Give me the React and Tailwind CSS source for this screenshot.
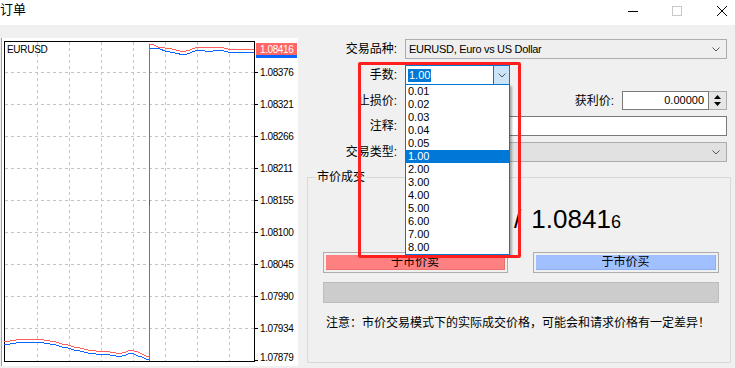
const lots = ["0.01", "0.02", "0.03", "0.04", "0.05", "1.00", "2.00", "3.00", "4.00", "5.00", "6.00", "7.00", "8.00"];

const levels = [
    { y: 72, label: "1.08376" },
    { y: 104, label: "1.08321" },
    { y: 136, label: "1.08266" },
    { y: 168, label: "1.08211" },
    { y: 200, label: "1.08155" },
    { y: 232, label: "1.08100" },
    { y: 264, label: "1.08045" },
    { y: 296, label: "1.07990" },
    { y: 328, label: "1.07934" },
];

const gridX = [37, 69, 101, 133, 165, 197, 229];

// ask / bid ticks, page coordinates
const askLeft = "4,342 10,341 16,340 22,339 30,339 37,339 44,340 50,341 56,342 62,344 68,345 74,347 80,348 88,350 96,351 104,351 110,352 116,353 122,353 126,352 130,350 134,351 138,352 142,354 146,356 149,357";
const bidLeft = "4,345 10,344 16,343 22,342 30,342 37,342 44,343 50,344 56,345 62,347 68,348 74,350 80,351 88,353 96,354 104,354 110,355 116,356 122,356 126,355 130,353 134,354 138,356 142,357 146,359 149,360";
const askRight = "149,44 154,45 158,47 165,48 172,49 180,51 186,51 190,50 197,47 205,47 213,47 220,47 228,49 254,49";
const bidRight = "150,48 155,48 160,49 165,51 175,53 184,55 190,53 197,50 205,51 213,51 220,50 228,52 254,52";

function Chevron({ className = "" }) {
    return (
        <svg width="8" height="5" viewBox="0 0 8 5" className={className}>
            <path d="M0.5 0.5 L4 4 L7.5 0.5" fill="none" stroke="#555" strokeWidth="1" />
        </svg>
    );
}

function Chart() {
    return (
        <div className="ml-[1px] mt-[13px] w-[297px] h-[328px] bg-white border-l border-[#a0a0a0] shrink-0">
            <svg width="296" height="328" viewBox="2 38 296 328" fontFamily="Liberation Sans, sans-serif">
                {gridX.map((x) => (
                    <line key={x} x1={x + 0.5} y1="42" x2={x + 0.5} y2="361" stroke="#c4c4c4" strokeDasharray="3 3" />
                ))}
                {levels.map((l) => (
                    <line key={l.y} x1="5" y1={l.y + 0.5} x2="254" y2={l.y + 0.5} stroke="#c4c4c4" strokeDasharray="3 3" />
                ))}
                <rect x="4.5" y="41.5" width="250" height="320" fill="none" stroke="#000" />

                <polyline points={bidLeft} fill="none" stroke="#0a64ff" shapeRendering="crispEdges" />
                <polyline points={askLeft} fill="none" stroke="#ff5c5c" shapeRendering="crispEdges" />
                <polyline points={bidRight} fill="none" stroke="#0a64ff" shapeRendering="crispEdges" />
                <polyline points={askRight} fill="none" stroke="#ff5c5c" shapeRendering="crispEdges" />
                <rect x="149" y="44" width="1" height="317" fill="#ff3c3c" />
                <rect x="149" y="200" width="1" height="5" fill="#0a64ff" />

                <text x="7" y="52.5" fontSize="10" letterSpacing="-0.3" fill="#000">EURUSD</text>

                {levels.map((l) => (
                    <g key={l.label}>
                        <line x1="254" y1={l.y + 0.5} x2="258" y2={l.y + 0.5} stroke="#000" />
                        <text x="260" y={l.y + 4} fontSize="10" letterSpacing="-0.4" fill="#000">{l.label}</text>
                    </g>
                ))}
                <line x1="254" y1="360.5" x2="258" y2="360.5" stroke="#000" />
                <text x="260" y="361" fontSize="10" letterSpacing="-0.4" fill="#000">1.07879</text>

                <rect x="256" y="55" width="41" height="3" fill="#0a64ff" />
                <rect x="256" y="43" width="41" height="12" fill="#ff6666" />
                <text x="260" y="52.5" fontSize="10" letterSpacing="-0.4" fill="#fff">1.08416</text>
            </svg>
        </div>
    );
}

function Label({ children, className = "w-[98px]" }) {
    return <div className={`${className} text-right text-[12px] leading-[14px] pr-[1px] shrink-0`}>{children}</div>;
}

function OrderForm() {
    return (
        <div className="flex flex-col pl-[2px]">
            {/* symbol */}
            <div className="mt-[14px] flex items-center h-[20px]">
                <Label>交易品种:</Label>
                <div className="ml-[7px] w-[322px] h-[20px] bg-[#efefef] border border-[#adadad] flex items-center pl-[3px] pr-[6px]">
                    <span className="text-[11px] tracking-[-0.3px]">EURUSD, Euro vs US Dollar</span>
                    <Chevron className="ml-auto" />
                </div>
            </div>

            {/* volume combo, opened */}
            <div className="mt-[6px] flex items-center h-[20px]">
                <Label>手数:</Label>
                <div className="relative ml-[7px] w-[105px] h-[20px] bg-white border border-[#0078d7] flex items-center z-10">
                    <span className="ml-[2px] px-[1px] bg-[#0078d7] text-white text-[11px] leading-[13px]">1.00</span>
                    <div className="ml-auto w-[16px] h-full bg-[#cce4f7] border-l border-[#0078d7] flex items-center justify-center">
                        <Chevron />
                    </div>
                    <div className="absolute left-[-1px] top-full w-[105px] bg-white border border-[#0078d7] shadow-[2px_2px_2px_rgba(0,0,0,0.3)]">
                        {lots.map((v) => (
                            <div key={v} className={`h-[13px] leading-[13px] text-[11px] pl-[2px] ${v === "1.00" ? "bg-[#0078d7] text-white" : "text-[#000]"}`}>{v}</div>
                        ))}
                    </div>
                </div>
            </div>

            {/* stop loss / take profit */}
            <div className="mt-[6px] flex items-center h-[19px]">
                <Label>止损价:</Label>
                <div className="ml-[7px] w-[105px] h-[19px] bg-white border border-[#7a7a7a]" />
                <Label className="w-[105px]">获利价:</Label>
                <div className="ml-[7px] flex h-[19px]">
                    <div className="w-[87px] h-full bg-white border border-[#7a7a7a] text-[11px] leading-[17px] text-right pr-[4px]">0.00000</div>
                    <div className="w-[18px] h-full bg-[#e6e6e6] border border-l-0 border-[#adadad] flex flex-col items-center justify-center gap-[3px]">
                        <svg width="7" height="4" viewBox="0 0 7 4"><path d="M3.5 0 L7 4 L0 4 Z" fill="#000" /></svg>
                        <svg width="7" height="4" viewBox="0 0 7 4"><path d="M0 0 L7 0 L3.5 4 Z" fill="#000" /></svg>
                    </div>
                </div>
            </div>

            {/* comment */}
            <div className="mt-[6px] flex items-center h-[20px]">
                <Label>注释:</Label>
                <div className="ml-[7px] w-[322px] h-[20px] bg-white border border-[#7a7a7a]" />
            </div>

            {/* order type */}
            <div className="mt-[6px] flex items-center h-[20px]">
                <Label>交易类型:</Label>
                <div className="ml-[7px] w-[322px] h-[20px] bg-[#e1e1e1] border border-[#adadad] flex items-center pr-[6px]">
                    <Chevron className="ml-auto" />
                </div>
            </div>

            {/* market execution group */}
            <div className="relative mt-[15px] ml-[7px] w-[424px] h-[186px] border border-[#d9d9d9] flex flex-col">
                <span className="absolute left-[8px] -top-[8px] px-[1px] bg-[#f0f0f0] text-[12px] leading-[14px]">市价成交</span>

                {/* sell price sits under the opened list, only the buy side shows */}
                <div className="mt-[26px] h-[30px] flex items-baseline leading-[30px]">
                    <div className="flex-1" />
                    <span className="text-[26px] whitespace-pre"> / </span>
                    <div className="flex-1 pl-[3px]">
                        <span className="text-[26px]">1.0841</span><span className="text-[18px]">6</span>
                    </div>
                </div>

                <div className="mt-[18px] flex pl-[15px] gap-[25px]">
                    <div className="w-[185px] h-[21px] border border-[#adadad] p-[2px] flex">
                        <div className="flex-1 bg-[#ff8080] border-r border-b border-[#e87070] flex items-start justify-center pt-[1px] text-[12px] leading-[13px]">于市价卖</div>
                    </div>
                    <div className="w-[186px] h-[21px] border border-[#adadad] p-[2px] flex">
                        <div className="flex-1 bg-[#a0c0ff] border-r border-b border-[#8eaeee] flex items-start justify-center pt-[1px] text-[12px] leading-[13px]">于市价买</div>
                    </div>
                </div>

                <div className="mt-[9px] ml-[15px] w-[396px] h-[21px] bg-[#cccccc] border border-[#bdbdbd]" />

                <div className="mt-[12px] ml-[18px] text-[12px] leading-[16px]">注意：市价交易模式下的实际成交价格，可能会和请求价格有一定差异！</div>
            </div>
        </div>
    );
}

export default function App() {
    return (
        <div className="relative w-[735px] h-[368px] overflow-hidden bg-[#f0f0f0] text-black flex flex-col font-['Liberation_Sans','Noto_Sans_CJK_SC',sans-serif]">
            <div className="h-[25px] bg-white flex items-start shrink-0">
                <span className="mt-[2px] text-[13px] leading-[15px]">订单</span>
                <div className="ml-auto mr-[8px] mt-[6px] h-[10px] flex items-center">
                    <div className="w-[10px] h-[1px] bg-black" />
                    <div className="ml-[34px] w-[10px] h-[10px] border border-[#c8c8c8]" />
                    <svg className="ml-[35px]" width="10" height="10" viewBox="0 0 10 10">
                        <path d="M0 0 L10 10 M10 0 L0 10" stroke="#000" strokeWidth="1" />
                    </svg>
                </div>
            </div>

            <div className="flex flex-1">
                <Chart />
                <OrderForm />
            </div>

            {/* annotation box around the volume list */}
            <div className="absolute left-[358px] top-[62px] w-[163px] h-[196px] border-[3px] border-[#ff1f1f] rounded-[2px] z-20 pointer-events-none" />
        </div>
    );
}
